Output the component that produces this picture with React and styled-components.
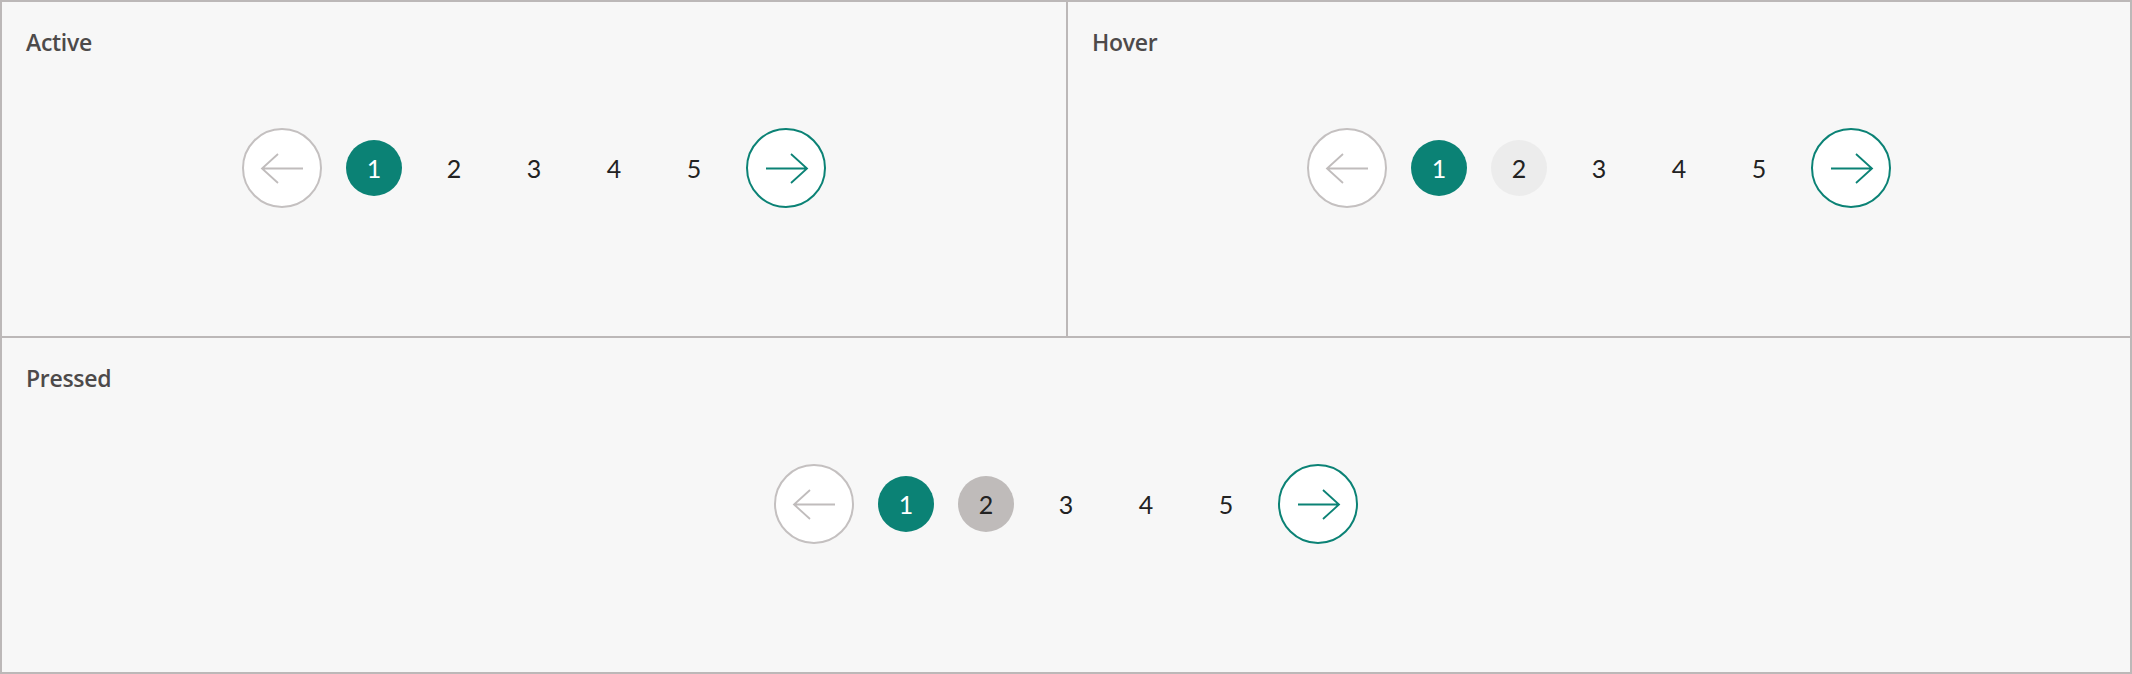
import styled, { createGlobalStyle } from "styled-components";

const GlobalStyle = createGlobalStyle`
  html, body {
    margin: 0;
    padding: 0;
    background: #f7f7f7;
  }
  body {
    font-family: "Lato", "Open Sans", sans-serif;
  }
`;

// 바깥 프레임
const Frame = styled.div`
  box-sizing: border-box;
  width: 2132px;
  height: 674px;
  border: 2px solid #bcb8b8;
  background: #bcb8b8;
  display: grid;
  grid-template-columns: 1064px 1fr;
  grid-template-rows: 1fr 1fr;
  gap: 2px;
`;

const Panel = styled.section`
  background: #f7f7f7;
  display: grid;
  grid-template-rows: 1fr auto 1fr;
  grid-column: ${(p) => (p.$wide ? "1 / span 2" : "auto")};
  min-height: 0;
  padding-bottom: 2px;
`;

const Title = styled.h3`
  margin: 0;
  padding: 24px 24px 0;
  align-self: start;
  font-family: "Open Sans", "Lato", sans-serif;
  font-size: 23px;
  font-weight: 600;
  letter-spacing: -0.3px;
  color: #4d4a4a;
`;

const Pager = styled.nav`
  display: flex;
  align-items: center;
  justify-content: center;
  gap: 24px;
`;

const ArrowButton = styled.button`
  box-sizing: border-box;
  width: 80px;
  height: 80px;
  border-radius: 50%;
  background: #ffffff;
  border: 2px solid ${(p) => (p.$disabled ? "#c4c0c0" : "#0b8275")};
  color: ${(p) => (p.$disabled ? "#c0bcbc" : "#0b8275")};
  padding: 0;
  display: flex;
  align-items: center;
  justify-content: center;
  cursor: pointer;

  svg {
    display: block;
  }
`;

const pageBg = {
  active: "#0b8275",
  hover: "#ececec",
  pressed: "#bfbbba",
  idle: "transparent",
};

const PageDot = styled.button`
  width: 56px;
  height: 56px;
  border-radius: 50%;
  border: none;
  padding: 0;
  background: ${(p) => pageBg[p.$state]};
  color: ${(p) => (p.$state === "active" ? "#ffffff" : "#222222")};
  font-family: "Lato", "Open Sans", sans-serif;
  font-size: 25px;
  font-weight: 400;
  display: flex;
  align-items: center;
  justify-content: center;
  cursor: pointer;
`;

const Arrow = ({ dir }) => (
  <svg width="76" height="76" viewBox="0 0 76 76" fill="none">
    {dir === "left" ? (
      <path
        d="M59 38.5H18M34 24L18 38.5L34 53"
        stroke="currentColor"
        strokeWidth="1.8"
      />
    ) : (
      <path
        d="M18 38.5H59M43 24L59 38.5L43 53"
        stroke="currentColor"
        strokeWidth="1.8"
      />
    )}
  </svg>
);

const Pagination = ({ second }) => (
  <Pager>
    <ArrowButton $disabled aria-label="이전">
      <Arrow dir="left" />
    </ArrowButton>
    {[1, 2, 3, 4, 5].map((n) => (
      <PageDot
        key={n}
        $state={n === 1 ? "active" : n === 2 ? second : "idle"}
      >
        {n}
      </PageDot>
    ))}
    <ArrowButton aria-label="다음">
      <Arrow dir="right" />
    </ArrowButton>
  </Pager>
);

const StatePanel = ({ title, second, wide }) => (
  <Panel $wide={wide}>
    <Title>{title}</Title>
    <Pagination second={second} />
  </Panel>
);

const App = () => (
  <>
    <GlobalStyle />
    <Frame>
      <StatePanel title="Active" second="idle" />
      <StatePanel title="Hover" second="hover" />
      <StatePanel title="Pressed" second="pressed" wide />
    </Frame>
  </>
);

export default App;
